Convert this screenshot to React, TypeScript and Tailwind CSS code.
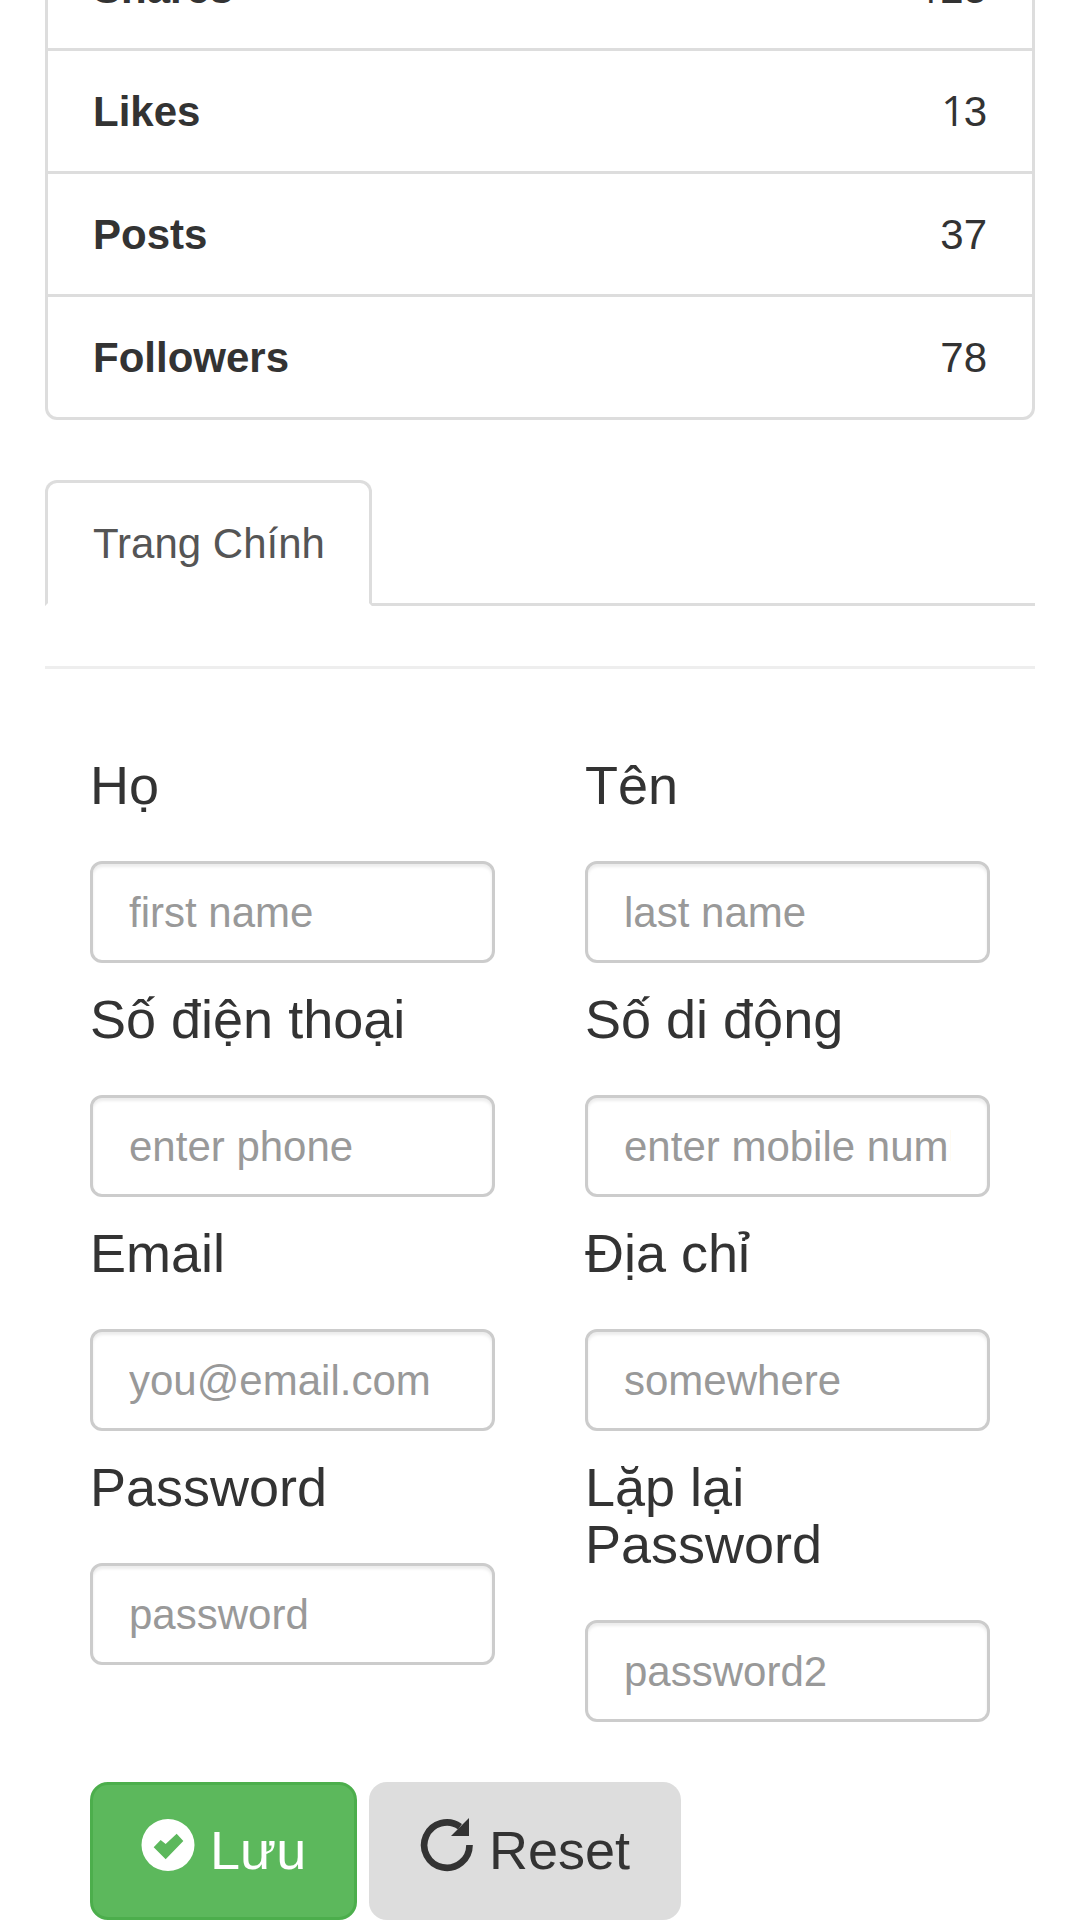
import React from 'react';

const stats = [
  { label: 'Shares', value: '125' },
  { label: 'Likes', value: '13' },
  { label: 'Posts', value: '37' },
  { label: 'Followers', value: '78' },
];

type FieldProps = { label: string; placeholder: string; type?: string };

const leftFields: FieldProps[] = [
  { label: 'Họ', placeholder: 'first name' },
  { label: 'Số điện thoại', placeholder: 'enter phone' },
  { label: 'Email', placeholder: 'you@email.com', type: 'email' },
  { label: 'Password', placeholder: 'password', type: 'password' },
];

const rightFields: FieldProps[] = [
  { label: 'Tên', placeholder: 'last name' },
  { label: 'Số di động', placeholder: 'enter mobile number' },
  { label: 'Địa chỉ', placeholder: 'somewhere' },
  { label: 'Lặp lại Password', placeholder: 'password2', type: 'password' },
];

function StatValue({ value }: { value: string }) {
  if (!value.startsWith('1')) return <span>{value}</span>;
  return (
    <span>
      <span className="-mr-[1.600px] ml-px font-['Open_Sans'] leading-[0]">1</span>
      {value.slice(1)}
    </span>
  );
}

function Field({ label, placeholder, type = 'text' }: FieldProps) {
  return (
    <label className="block">
      <span className="block pt-[28px] pb-[47px] text-[54px] leading-[57px]">{label}</span>
      <input
        type={type}
        placeholder={placeholder}
        className="block h-[102px] w-full rounded-[12px] border-[3px] border-[#ccc] bg-white px-9 pt-[19px] pb-[17px] text-[42px] leading-[60px] text-[#555] shadow-[inset_0_3px_3px_rgba(0,0,0,0.075)] placeholder:text-[#999]"
      />
    </label>
  );
}

function CheckCircleIcon() {
  return (
    <svg viewBox="183 174 162 162" className="h-[54px] w-[54px]" fill="currentColor">
      <path
        fillRule="evenodd"
        d="M264 177a79.5 78 0 1 0 0 156a79.5 78 0 1 0 0-156zM221 262l21-22l15 12l33-31l20 22l-53 55z"
      />
    </svg>
  );
}

function RepeatIcon() {
  return (
    <svg viewBox="180 174 162 162" className="h-[54px] w-[54px]">
      <path d="M328.500 255a68 68 0 1 1-28.500-55" fill="none" stroke="currentColor" strokeWidth="20" />
      <path d="M327 174v54h-54z" fill="currentColor" />
    </svg>
  );
}

export default function App() {
  return (
    <main
      className="h-[1920px] w-[1080px] overflow-hidden bg-white px-[45px] text-[42px] leading-[60px] text-[#333]"
      style={{ fontFamily: '"Liberation Sans", Arial, sans-serif' }}
    >
      <ul className="-mt-[75px] rounded-b-[12px] border-[3px] border-[#ddd]">
        {stats.map((s) => (
          <li
            key={s.label}
            className="flex justify-between border-b-[3px] border-[#ddd] px-[45px] pt-[31px] pb-[29px] last:border-b-0"
          >
            <strong className="font-bold">{s.label}</strong>
            <StatValue value={s.value} />
          </li>
        ))}
      </ul>

      <nav className="mt-[60px] flex h-[126px] border-b-[3px] border-[#ddd]">
        <a className="-mb-[3px] h-[126px] w-[327px] rounded-t-[12px] border-[3px] border-[#ddd] border-b-transparent bg-white pt-[31px] pl-[45px] whitespace-nowrap text-[#555]">
          Trang Chính
        </a>
      </nav>
      <hr className="mt-[60px] border-t-[3px] border-[#eee]" />

      <form className="px-[45px] pt-[60px]">
        <div className="grid grid-cols-2 gap-x-[90px]">
          <div>
            {leftFields.map((f) => (
              <Field key={f.label} {...f} />
            ))}
          </div>
          <div>
            {rightFields.map((f) => (
              <Field key={f.label} {...f} />
            ))}
          </div>
        </div>
        <div className="mt-[60px] flex gap-3 text-[54px] leading-[72px]">
          <button
            type="submit"
            className="flex h-[138px] w-[267px] gap-[15px] rounded-[18px] border-[3px] border-[#4cae4c] bg-[#5cb85c] px-12 pt-[29px] text-white"
          >
            <span className="pt-1">
              <CheckCircleIcon />
            </span>
            Lưu
          </button>
          <button
            type="reset"
            className="flex h-[138px] w-[312px] gap-[15px] rounded-[18px] border-[3px] border-transparent bg-[#ddd] px-12 pt-[29px]"
          >
            <span className="pt-1">
              <RepeatIcon />
            </span>
            Reset
          </button>
        </div>
      </form>
    </main>
  );
}
